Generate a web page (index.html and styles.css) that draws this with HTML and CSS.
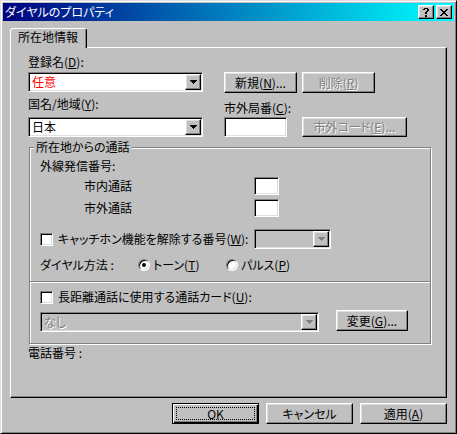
FILE: index.html
```html
<!DOCTYPE html>
<html lang="ja">
<head>
<meta charset="utf-8">
<title>ダイヤルのプロパティ</title>
<link rel="stylesheet" href="styles.css">
</head>
<body>
<div class="window">
  <div class="titlebar">
    <span class="title">ダイヤルのプロパティ</span>
    <div class="caption-btns">
      <span class="cbtn raised"><svg width="6" height="9" viewBox="0 0 6 9" shape-rendering="crispEdges"><path d="M1 0h4v1H1z M0 1h2v1H0z M4 1h2v2H4z M3 3h2v1H3z M2 4h2v2H2z M2 7h2v2H2z" fill="#000"/></svg></span>
      <span class="cbtn raised"><svg width="8" height="7" viewBox="0 0 8 7" shape-rendering="crispEdges"><path d="M0 0h2v1H0z M6 0h2v1H6z M1 1h2v1H1z M5 1h2v1H5z M2 2h4v1H2z M3 3h2v1H3z M2 4h4v1H2z M1 5h2v1H1z M5 5h2v1H5z M0 6h2v1H0z M6 6h2v1H6z" fill="#000"/></svg></span>
    </div>
  </div>
  <div class="client">
    <div class="tabs"><div class="tab">所在地情報</div></div>
    <div class="panel">
      <div class="row">
        <div class="col-left">
          <div class="lbl">登録名(<u>D</u>):</div>
          <div class="combo sunken combo-a">
            <span class="combo-text red">任意</span>
            <span class="dd raised"><svg width="7" height="4" viewBox="0 0 7 4" shape-rendering="crispEdges"><path d="M0 0h7v1H0z M1 1h5v1H1z M2 2h3v1H2z M3 3h1v1H3z" fill="#000"/></svg></span>
          </div>
        </div>
        <div class="btn-pair">
          <div class="btn raised w73">新規(<u>N</u>)...</div>
          <div class="btn raised w73 dis">削除(<u>R</u>)</div>
        </div>
      </div>
      <div class="row">
        <div class="col-left">
          <div class="lbl lbl-country">国名/地域(<u>Y</u>):</div>
          <div class="combo sunken combo-b">
            <span class="combo-text">日本</span>
            <span class="dd raised"><svg width="7" height="4" viewBox="0 0 7 4" shape-rendering="crispEdges"><path d="M0 0h7v1H0z M1 1h5v1H1z M2 2h3v1H2z M3 3h1v1H3z" fill="#000"/></svg></span>
          </div>
        </div>
        <div class="col-right">
          <div class="lbl lbl-area">市外局番(<u>C</u>):</div>
          <div class="area-row">
            <div class="edit sunken edit-area"></div>
            <div class="btn raised w105 dis">市外コード(<u>E</u>)...</div>
          </div>
        </div>
      </div>

      <div class="group">
        <div class="legend">所在地からの通話</div>
        <div class="sec">
          <div class="lbl sub-title">外線発信番号:</div>
          <div class="num-row">
            <span class="num-lbl">市内通話</span>
            <div class="edit sunken edit-num"></div>
          </div>
          <div class="num-row">
            <span class="num-lbl">市外通話</span>
            <div class="edit sunken edit-num"></div>
          </div>
          <div class="cw-row">
            <div class="check-lbl"><span class="chk sunken"></span><span>キャッチホン機能を解除する番号(<u>W</u>):</span></div>
            <div class="combo sunken combo-off combo-cw">
              <span class="combo-text"></span>
              <span class="dd raised"><svg width="7" height="4" viewBox="0 0 7 4" shape-rendering="crispEdges"><path d="M0 0h7v1H0z M1 1h5v1H1z M2 2h3v1H2z M3 3h1v1H3z" fill="#808080"/></svg></span>
            </div>
          </div>
          <div class="dial-row">
            <span class="dial-lbl">ダイヤル方法 :</span>
            <span class="opt opt-tone"><span class="radio on"></span><span>トーン(<u>T</u>)</span></span>
            <span class="opt"><span class="radio"></span><span>パルス(<u>P</u>)</span></span>
          </div>
        </div>
        <div class="sep"></div>
        <div class="sec sec-card">
          <div class="card-check"><span class="chk sunken"></span><span>長距離通話に使用する通話カード(<u>U</u>):</span></div>
          <div class="card-row">
            <div class="combo sunken combo-off combo-card">
              <span class="combo-text dis">なし</span>
              <span class="dd raised"><svg width="7" height="4" viewBox="0 0 7 4" shape-rendering="crispEdges"><path d="M0 0h7v1H0z M1 1h5v1H1z M2 2h3v1H2z M3 3h1v1H3z" fill="#808080"/></svg></span>
            </div>
            <div class="btn raised w72">変更(<u>G</u>)...</div>
          </div>
        </div>
      </div>
      <div class="lbl phone">電話番号 :</div>
    </div>
    <div class="footer">
      <div class="btn btn-default w87"><span class="focus">OK</span></div>
      <div class="btn raised w87">キャンセル</div>
      <div class="btn raised w87">適用(<u>A</u>)</div>
    </div>
  </div>
</div>
</body>
</html>
```

FILE: styles.css
```css
* { box-sizing: border-box; }
html, body { margin: 0; padding: 0; }
body {
  width: 457px;
  height: 434px;
  overflow: hidden;
  background: #c0c0c0;
  color: #000;
  font-family: "Noto Sans CJK JP", "Noto Sans", sans-serif;
  font-size: 12px;
  line-height: 14px;
  font-feature-settings: "palt";
}
u { text-decoration: underline; text-underline-offset: 1px; }

.raised {
  border: 1px solid;
  border-color: #fff #000 #000 #fff;
  box-shadow: inset -1px -1px #808080, inset 1px 1px #dfdfdf;
  background: #c0c0c0;
}
.sunken {
  border: 1px solid;
  border-color: #808080 #fff #fff #808080;
  box-shadow: inset 1px 1px #000, inset -1px -1px #dfdfdf;
}
.dis { color: #808080; text-shadow: 1px 1px #fff; }
.red { color: #ff0000; }

.window {
  width: 457px;
  height: 434px;
  border: 1px solid;
  border-color: #dfdfdf #000 #000 #dfdfdf;
  box-shadow: inset 1px 1px #fff, inset -1px -1px #808080;
  padding: 2px;
  display: flex;
  flex-direction: column;
  background: #c0c0c0;
}

.titlebar {
  height: 18px;
  flex-shrink: 0;
  display: flex;
  align-items: center;
  background: linear-gradient(to right, #000080, #00ffff);
  padding-left: 2px;
}
.title { flex: 1; color: #fff; line-height: 18px; white-space: nowrap; }
.caption-btns { display: flex; gap: 2px; margin-right: 2px; }
.cbtn {
  width: 16px;
  height: 14px;
  display: flex;
  align-items: center;
  justify-content: center;
}
.cbtn svg { display: block; }

.client { flex: 1; padding: 7px 7px 0; display: flex; flex-direction: column; }

.tabs { display: flex; height: 20px; margin-bottom: -1px; position: relative; z-index: 1; }
.tab {
  width: 77px;
  height: 20px;
  padding: 1px 0 0 7px;
  border: 1px solid #fff;
  border-bottom: 0;
  border-right-color: #000;
  border-radius: 3px 3px 0 0;
  box-shadow: inset -1px 0 #808080;
  background: #c0c0c0;
  white-space: nowrap;
}

.panel {
  height: 351px;
  flex-shrink: 0;
  border: 1px solid;
  border-color: #fff #000 #000 #fff;
  box-shadow: inset -1px -1px #808080;
  padding: 7px 0 0 17px;
}

.row { display: flex; align-items: flex-start; gap: 21px; }
.col-left { width: 175px; display: flex; flex-direction: column; }
.col-right { display: flex; flex-direction: column; }
.lbl { line-height: 14px; white-space: nowrap; }

.combo {
  height: 20px;
  padding: 1px;
  display: flex;
  align-items: center;
  background: #fff;
}
.combo-text { flex: 1; padding-left: 2px; white-space: nowrap; line-height: 16px; }
.combo-off { background: #c0c0c0; }
.dd {
  width: 16px;
  height: 16px;
  flex-shrink: 0;
  display: flex;
  align-items: center;
  justify-content: center;
}
.dd svg { display: block; }
.combo-a { margin-top: 3px; }
.lbl-country { margin-top: 4px; }
.combo-b { margin-top: 6px; }
.lbl-area { margin-top: 8px; }

.btn {
  height: 21px;
  display: flex;
  align-items: center;
  justify-content: center;
  white-space: nowrap;
  line-height: 14px;
}
.w72 { width: 72px; }
.w73 { width: 73px; }
.w87 { width: 87px; }
.w105 { width: 105px; height: 20px; }
.btn-pair { display: flex; gap: 5px; margin-top: 17px; }

.area-row { display: flex; gap: 15px; margin-top: 2px; }
.edit { background: #fff; }
.edit-area { width: 63px; height: 20px; }
.edit-num { width: 25px; height: 18px; }

.group {
  width: 402px;
  margin: 10px 0 0 1px;
  border: 1px solid #808080;
  box-shadow: inset 1px 1px #fff, 1px 1px #fff;
}
.legend {
  width: max-content;
  margin: -8px 0 0 4px;
  padding: 0 2px;
  line-height: 14px;
  background: #c0c0c0;
}
.sec { padding-left: 10px; }
.sub-title { margin-top: 5px; }
.num-row { display: flex; align-items: center; height: 18px; margin-top: 4px; }
.num-lbl { width: 214px; flex-shrink: 0; padding-left: 44px; line-height: 14px; }

.cw-row { display: flex; align-items: center; height: 20px; margin-top: 12px; }
.check-lbl { width: 214px; flex-shrink: 0; display: flex; align-items: center; gap: 5px; white-space: nowrap; }
.chk { width: 13px; height: 13px; flex-shrink: 0; background: #fff; }
.combo-cw { width: 77px; }

.dial-row { display: flex; align-items: center; height: 14px; margin-top: 9px; white-space: nowrap; }
.dial-lbl { width: 98px; }
.opt { display: flex; align-items: center; gap: 3px; }
.opt-tone { width: 88px; }
.radio {
  width: 12px;
  height: 12px;
  flex-shrink: 0;
  border-radius: 50%;
  background: #fff;
  border: 1px solid;
  border-color: #808080 #fff #fff #808080;
  box-shadow: inset 1px 1px #000, inset -1px -1px #dfdfdf;
  display: flex;
  align-items: center;
  justify-content: center;
}
.radio.on::after {
  content: "";
  width: 4px;
  height: 4px;
  border-radius: 50%;
  background: #000;
}

.sep { margin-top: 9px; border-top: 1px solid #808080; border-bottom: 1px solid #fff; }
.card-check { display: flex; align-items: center; gap: 5px; height: 14px; margin-top: 7px; white-space: nowrap; }
.card-row { display: flex; align-items: flex-start; margin-top: 6px; margin-bottom: 11px; }
.combo-card { width: 279px; margin-top: 2px; }
.card-row .btn { margin-left: 17px; }

.phone { margin-top: 2px; }

.footer { display: flex; justify-content: flex-end; gap: 7px; margin-top: 5px; }
.btn-default {
  border: 1px solid #000;
  box-shadow: inset 1px 1px #fff, inset -1px -1px #000, inset -2px -2px #808080;
  background: #c0c0c0;
  padding: 3px;
}
.focus {
  flex: 1;
  align-self: stretch;
  border: 1px dotted #000;
  display: flex;
  align-items: center;
  justify-content: center;
}
```
